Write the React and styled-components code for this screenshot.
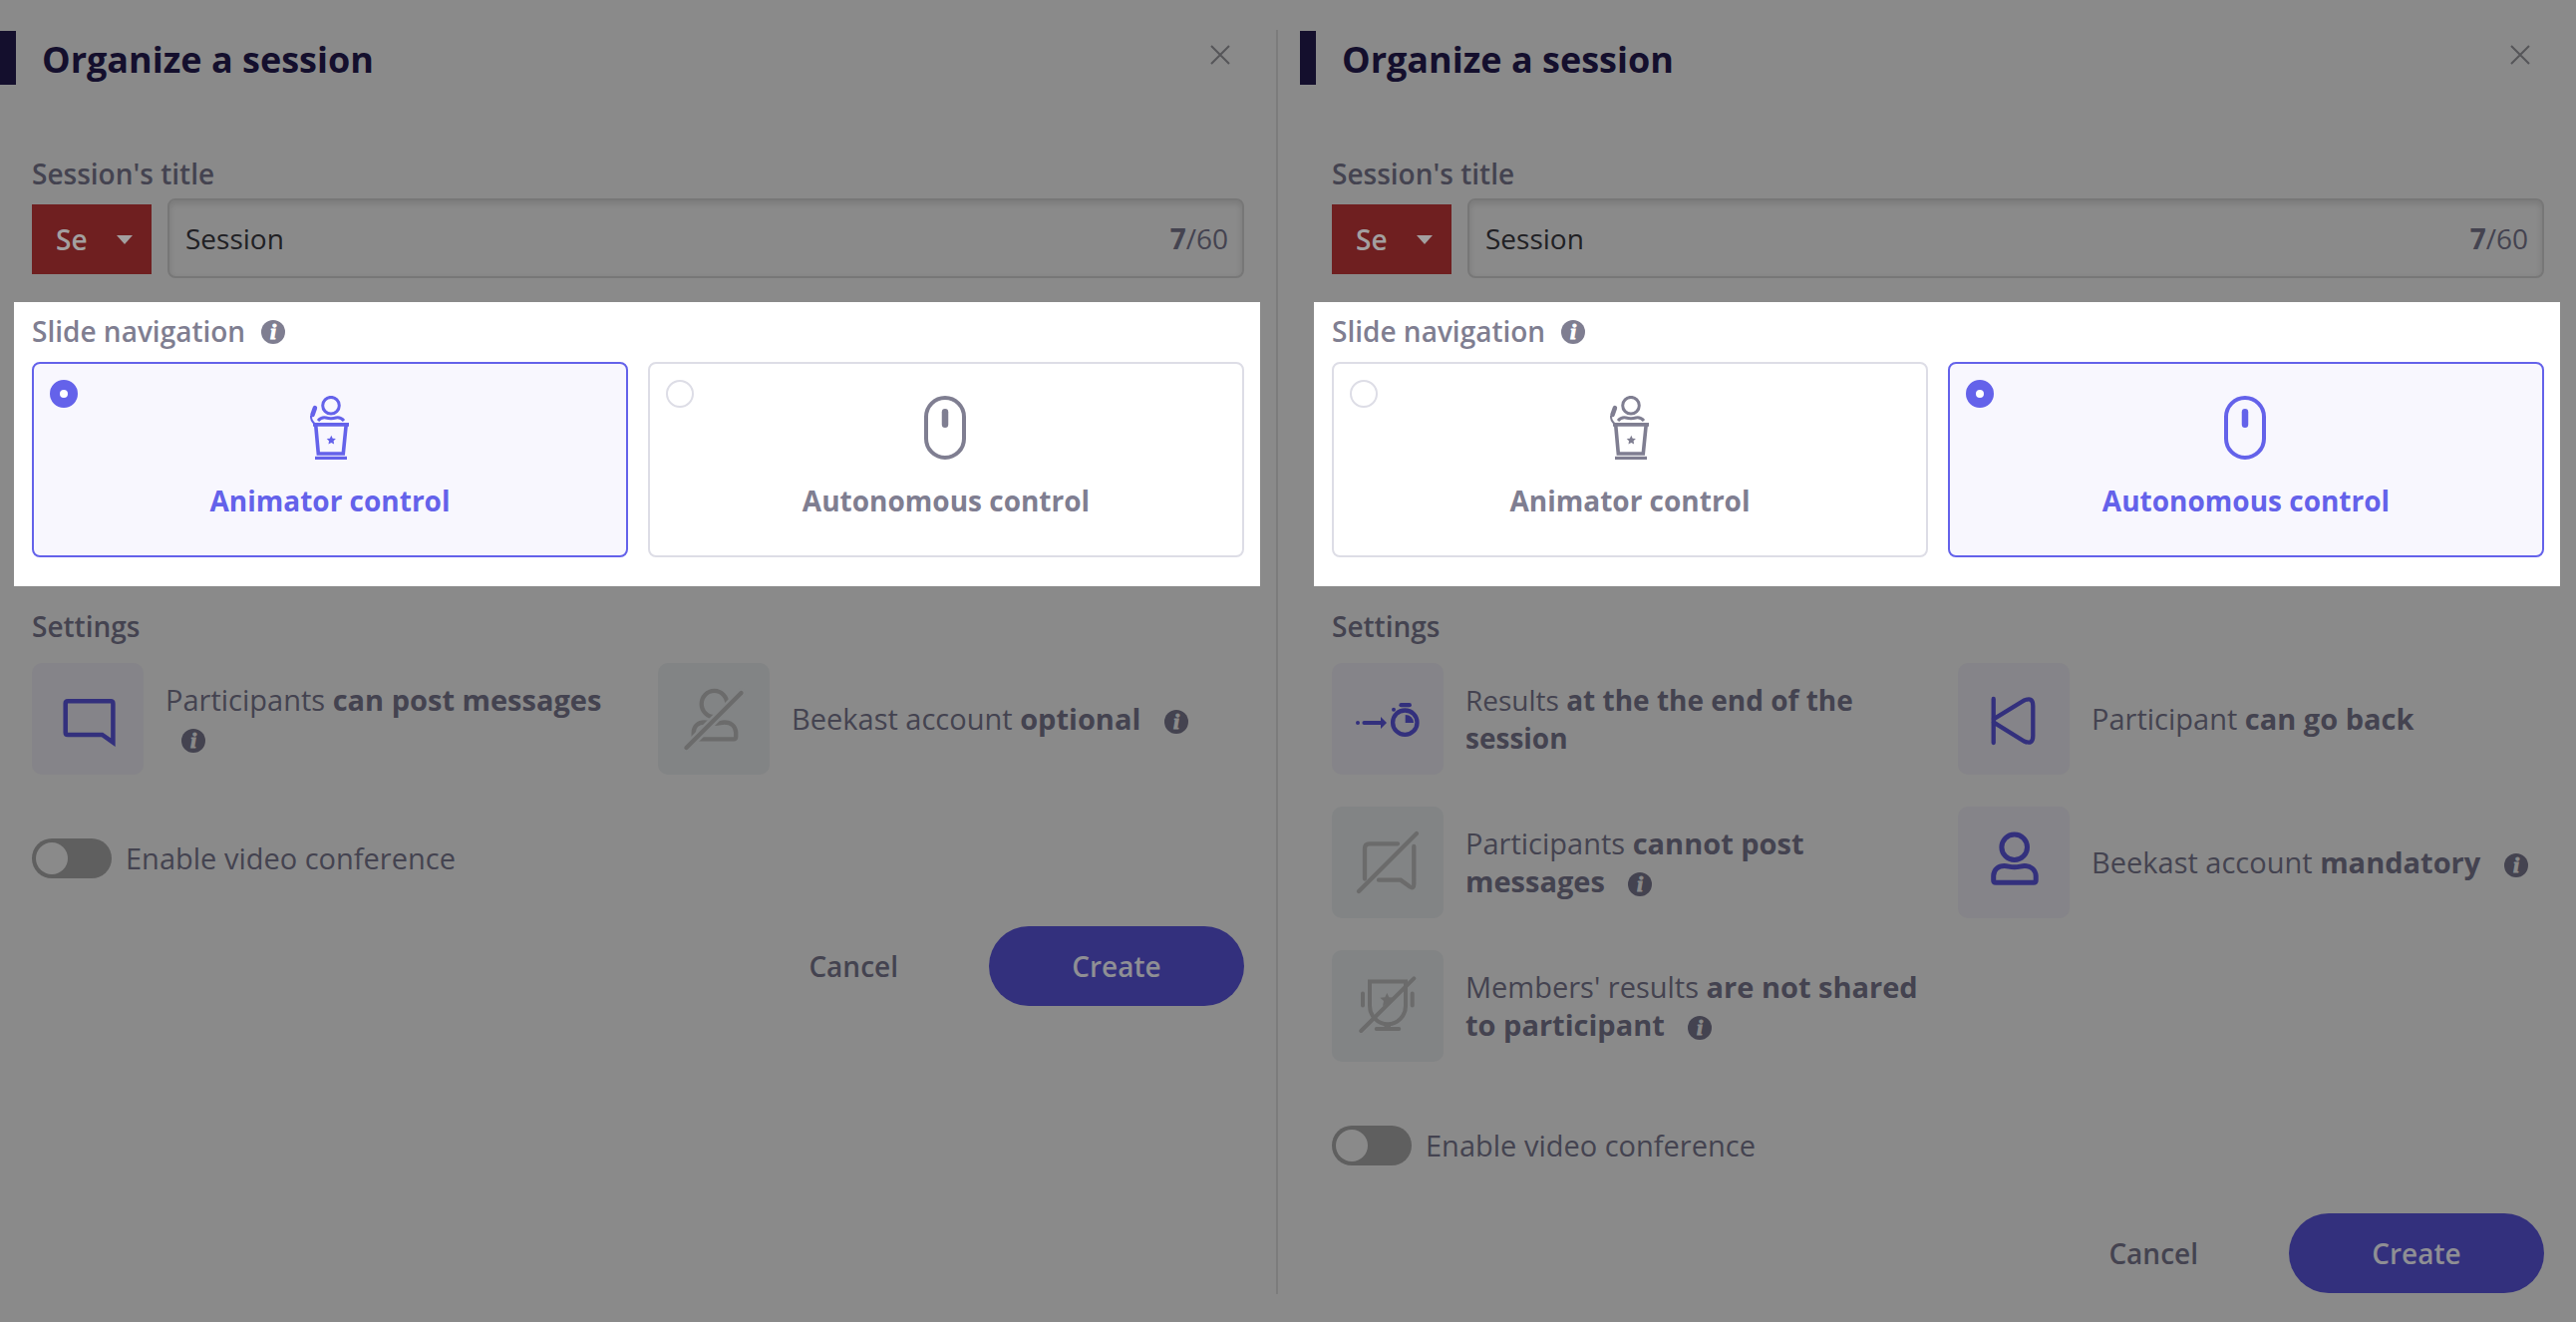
import { useId, useState } from "react";
import styled, { createGlobalStyle } from "styled-components";

const sessions = [
  {
    mode: "animator",
    settings: [
      {
        icon: "message",
        on: true,
        text: "Participants",
        strong: "can post messages",
        info: true,
      },
      {
        icon: "personOff",
        on: false,
        text: "Beekast account",
        strong: "optional",
        info: true,
      },
    ],
  },
  {
    mode: "autonomous",
    settings: [
      {
        icon: "timer",
        on: true,
        text: "Results",
        strong: "at the the end of the session",
        compact: true,
      },
      { icon: "back", on: true, text: "Participant", strong: "can go back" },
      {
        icon: "messageOff",
        on: false,
        text: "Participants",
        strong: "cannot post messages",
        info: true,
      },
      {
        icon: "person",
        on: true,
        text: "Beekast account",
        strong: "mandatory",
        info: true,
      },
      {
        icon: "trophyOff",
        on: false,
        text: "Members' results",
        strong: "are not shared to participant",
        info: true,
      },
    ],
  },
];

const personBody =
  "M35.7 69.5c.3-6.500 4.800-10 11-10 3.600 0 5 1.300 10 1.300s6.400-1.300 10-1.300c6.200 0 11 3.500 11.500 10v4.500q0 2.300-2.300 2.300H38q-2.300 0-2.300-2.300z";

const icons = {
  message: (
    <path
      d="M81.400 79.600 70.500 72H36q-2.300 0-2.300-2.300V40.600q0-2.300 2.300-2.300h43q2.400 0 2.400 2.400z"
      strokeWidth="4.500"
    />
  ),
  messageOff: (
    <>
      <path d="M33 72.500V42q0-4.700 4.700-4.700H66" />
      <path d="M82.300 40v38q0 5-4.300 2.300l-9-6.600H47" />
      <path d="M27 85 85 27" />
    </>
  ),
  person: (
    <g strokeWidth="5">
      <circle cx="56.700" cy="40.700" r="12.800" />
      <path d={personBody} />
    </g>
  ),
  personOff: (
    <>
      <ellipse cx="56.500" cy="41" rx="12.800" ry="13.200" />
      <path d={personBody} />
      <path d="M28.500 85 83.500 30" stroke="#828485" strokeWidth="9" />
      <path d="M28.500 85 83.500 30" />
    </>
  ),
  timer: (
    <>
      <circle cx="26" cy="60" r="2" fill="currentColor" stroke="none" />
      <path d="M32.400 60H49" strokeWidth="4" />
      <path d="m49 54 6 6-6 6z" fill="currentColor" stroke="none" />
      <circle cx="73.300" cy="59.700" r="12.200" />
      <path d="M69.500 42.200h8.300" />
      <circle cx="62" cy="46.700" r="2" fill="currentColor" stroke="none" />
      <path d="M73.700 60v-8q7.800.3 8.300 8z" fill="currentColor" stroke="none" />
    </>
  ),
  back: (
    <>
      <path d="M35.700 36v44" />
      <path d="M36 56.200 66.500 37.500q8.800-4 8.800 5.500v30q0 9.500-8.800 5.500L36 59.600" />
    </>
  ),
  trophyOff: (
    <g strokeWidth="4">
      <path
        d="m55.300 43 2 4.300 4.900.5-3.600 3.300 1 4.800-4.300-2.400-4.300 2.400 1-4.800-3.600-3.300 4.900-.5z"
        fill="currentColor"
        stroke="none"
      />
      <path d="M30.800 82.500 83.800 29.800" stroke="#828485" />
      <path d="M38 31.500h36v24.300a18 18.500 0 0 1-36 0z" strokeLinejoin="miter" />
      <path d="M52.500 73.500h6.500v5h-6.500z" fill="currentColor" stroke="none" />
      <path d="M44.700 79h22.600M31 43.500v12M80.700 43.500v12" />
      <path d="M29.300 81 82.300 28.300" />
    </g>
  ),
};

const AnimatorIcon = () => (
  <svg width="48" height="64" viewBox="1 0 48 64" fill="none" aria-hidden="true">
    <g stroke="currentColor">
      <circle cx="26" cy="9.700" r="8.300" strokeWidth="3" />
      <path d="M13 25q3.500-4 8-3 5 1.500 10 0 4.500-1 8 3" strokeWidth="3" />
      <path d="M9.900 12.200 7.500 19" strokeWidth="4.600" strokeLinecap="round" />
      <path d="M6 20q-.5 4.500 4 8.500" strokeWidth="2" />
      <path d="M8 28.900h36" strokeWidth="3.800" />
      <path d="M10.700 29 13.300 58h25l2.900-29" strokeWidth="3.600" />
      <path d="M10 62.400h32" strokeWidth="3.200" />
    </g>
    <path
      d="m26.300 39.800 1.400 2.900 3.200.4-2.300 2.200.5 3.200-2.800-1.500-2.800 1.500.5-3.200-2.300-2.200 3.200-.4z"
      fill="currentColor"
    />
  </svg>
);

const MouseIcon = () => (
  <svg width="48" height="64" viewBox="1 0 48 64" fill="none" aria-hidden="true">
    <rect
      x="5"
      y="2"
      width="38"
      height="60"
      rx="19"
      stroke="currentColor"
      strokeWidth="4"
    />
    <path
      d="M24 16.300v12.400"
      stroke="currentColor"
      strokeWidth="6.500"
      strokeLinecap="round"
    />
  </svg>
);

const InfoIcon = ({ color, hole }) => (
  <InfoSvg viewBox="0 0 24 24" role="img" aria-label="More information">
    <circle cx="12" cy="12" r="12" fill={color} />
    <text
      x="12"
      y="19"
      textAnchor="middle"
      fontFamily="'Liberation Serif', serif"
      fontStyle="italic"
      fontWeight="700"
      fontSize="22"
      fill={hole}
      stroke={hole}
      strokeWidth="1"
    >
      i
    </text>
  </InfoSvg>
);

const Setting = ({ icon, on, text, strong, info, compact }) => (
  <SettingItem $compact={compact}>
    <Tile $on={on}>
      <svg
        viewBox="0 0 112 112"
        fill="none"
        stroke="currentColor"
        strokeWidth="4.300"
        strokeLinecap="round"
        aria-hidden="true"
      >
        {icons[icon]}
      </svg>
    </Tile>
    <p>
      {text} <strong>{strong}</strong>{" "}
      {info && <InfoIcon color="#444350" hole="#8a8a8a" />}
    </p>
  </SettingItem>
);

const SessionPanel = ({ mode, settings }) => {
  const id = useId();
  const [title, setTitle] = useState("Session");
  const [control, setControl] = useState(mode);
  const [video, setVideo] = useState(false);

  return (
    <Panel>
      <Header>
        <h1>Organize a session</h1>
        <CloseButton type="button" aria-label="Close">
          <svg width="20" height="20" viewBox="0 0 20 20" aria-hidden="true">
            <path d="m1 1 18 18M19 1 1 19" stroke="currentColor" strokeWidth="2" />
          </svg>
        </CloseButton>
      </Header>
      <Section>
        <FieldLabel htmlFor={`${id}title`}>Session's title</FieldLabel>
        <TitleRow>
          <TagSelect>
            <select aria-label="Session tag" defaultValue="Se">
              <option>Se</option>
            </select>
            <svg width="16" height="9" viewBox="0 0 16 9" aria-hidden="true">
              <path d="M0 0h16L8 9z" fill="currentColor" />
            </svg>
          </TagSelect>
          <TitleField>
            <input
              id={`${id}title`}
              type="text"
              maxLength={60}
              value={title}
              onChange={(e) => setTitle(e.target.value)}
            />
            <span>
              <b>{title.length}</b>/60
            </span>
          </TitleField>
        </TitleRow>
      </Section>
      <Spotlight>
        <legend>
          Slide navigation <InfoIcon color="#7f7e91" hole="#ffffff" />
        </legend>
        <Cards>
          <Card $selected={control === "animator"}>
            <Radio
              type="radio"
              name={`${id}control`}
              checked={control === "animator"}
              onChange={() => setControl("animator")}
            />
            <CardBody>
              <AnimatorIcon />
              Animator control
            </CardBody>
          </Card>
          <Card $selected={control === "autonomous"}>
            <Radio
              type="radio"
              name={`${id}control`}
              checked={control === "autonomous"}
              onChange={() => setControl("autonomous")}
            />
            <CardBody>
              <MouseIcon />
              Autonomous control
            </CardBody>
          </Card>
        </Cards>
      </Spotlight>
      <Section>
        <h2>Settings</h2>
        <SettingsGrid>
          {settings.map((setting) => (
            <Setting key={setting.icon} {...setting} />
          ))}
        </SettingsGrid>
        <SwitchLabel>
          <Switch
            type="checkbox"
            role="switch"
            checked={video}
            onChange={(e) => setVideo(e.target.checked)}
          />
          Enable video conference
        </SwitchLabel>
        <Actions>
          <Button type="button">Cancel</Button>
          <Button type="submit" $primary>
            Create
          </Button>
        </Actions>
      </Section>
    </Panel>
  );
};

const App = () => (
  <>
    <GlobalStyle />
    <Page>
      <SessionPanel {...sessions[0]} />
      <Divider />
      <SessionPanel {...sessions[1]} />
    </Page>
  </>
);
export default App;

const GlobalStyle = createGlobalStyle`
  * {
    box-sizing: border-box;
  }
  body {
    margin: 0;
    background-color: #8a8a8a;
    color: #444350;
    font-family: "Open Sans", "Noto Sans", sans-serif;
    font-size: 28px;
    line-height: 38px;
  }
  h1, h2, p {
    margin: 0;
  }
  button, input, select {
    font: inherit;
    color: inherit;
  }
`;

const Page = styled.main`
  display: grid;
  grid-template-columns: minmax(0, 1fr) 24px minmax(0, 1fr);
  min-height: 100vh;
`;

const Divider = styled.div`
  width: 2px;
  margin: 30px 0 28px;
  background-color: #7c7c7c;
`;

const Panel = styled.form`
  padding: 31px 0 29px;
`;

const Header = styled.header`
  display: flex;
  justify-content: space-between;
  padding-right: 34px;
  border-left: 16px solid #140f2d;
  margin-bottom: 70px;
  h1 {
    padding: 4px 0 0 26px;
    color: #140f2d;
    font-size: 36px;
    line-height: 50px;
    font-weight: 700;
  }
`;

const CloseButton = styled.button`
  display: flex;
  align-self: flex-start;
  padding: 14px 12px;
  border: 0;
  background: none;
  color: #565659;
  cursor: pointer;
`;

const Section = styled.section`
  padding: 0 32px;
  h2 {
    margin: 21px 0 18px;
    font-size: 28px;
    line-height: 38px;
    font-weight: 600;
  }
`;

const FieldLabel = styled.label`
  display: block;
  margin-bottom: 6px;
  font-weight: 600;
`;

const TitleRow = styled.div`
  display: flex;
  align-items: center;
  gap: 16px;
`;

const TagSelect = styled.div`
  display: grid;
  align-items: center;
  width: 120px;
  margin-top: 2px;
  background-color: #6f1f20;
  color: #a3a0a0;
  select,
  svg {
    grid-area: 1 / 1;
  }
  select {
    appearance: none;
    width: 100%;
    height: 70px;
    padding: 0 24px;
    border: 0;
    background: none;
    font-weight: 600;
  }
  svg {
    justify-self: end;
    margin-right: 19px;
    pointer-events: none;
  }
`;

const TitleField = styled.div`
  display: flex;
  align-items: center;
  flex: 1;
  height: 80px;
  padding: 0 14px 0 16px;
  border: 2px solid #777777;
  border-radius: 8px;
  box-shadow: inset 0 3px 6px rgba(0, 0, 0, 0.12);
  input {
    flex: 1;
    min-width: 0;
    padding: 0;
    border: 0;
    outline: 0;
    background: none;
    color: #202024;
  }
`;

const Spotlight = styled.fieldset`
  margin: 24px 16px 0 14px;
  padding: 10px 16px 29px 18px;
  border: 0;
  background-color: #ffffff;
  color: #7f7e91;
  legend {
    float: left;
    width: 100%;
    height: 38px;
    padding: 0;
    margin-bottom: 12px;
    font-weight: 600;
  }
`;

const InfoSvg = styled.svg`
  width: 24px;
  height: 24px;
  margin-left: 16px;
  vertical-align: -4px;
  legend & {
    margin-left: 9px;
    vertical-align: -2px;
  }
`;

const Cards = styled.div`
  clear: both;
  display: grid;
  grid-template-columns: 1fr 1fr;
  gap: 20px;
`;

const Card = styled.label`
  display: grid;
  grid-template-columns: 28px 1fr 28px;
  align-items: start;
  padding: 16px;
  border: 2px solid ${(props) => (props.$selected ? "#6462ea" : "#dddde6")};
  border-radius: 8px;
  background-color: ${(props) => (props.$selected ? "#f8f7fe" : "#ffffff")};
  color: ${(props) => (props.$selected ? "#6462ea" : "#7f7e91")};
  cursor: pointer;
`;

const Radio = styled.input`
  appearance: none;
  width: 28px;
  height: 28px;
  margin: 0;
  border: 2px solid #dddde6;
  border-radius: 50%;
  background-color: #ffffff;
  &:checked {
    border: 10px solid #6462ea;
  }
`;

const CardBody = styled.span`
  display: flex;
  flex-direction: column;
  align-items: center;
  gap: 22px;
  padding: 16px 0 20px;
  font-weight: 700;
`;

const SettingsGrid = styled.div`
  display: grid;
  grid-template-columns: 1fr 1fr;
  gap: 32px 40px;
`;

const SettingItem = styled.div`
  display: flex;
  align-items: center;
  gap: 22px;
  font-size: ${(props) => (props.$compact ? "28px" : "29px")};
  strong {
    font-weight: 700;
  }
`;

const Tile = styled.div`
  flex: none;
  width: 112px;
  height: 112px;
  border-radius: 10px;
  background-color: ${(props) => (props.$on ? "#858489" : "#828485")};
  color: ${(props) => (props.$on ? "#33307d" : "#6b6b6b")};
  svg {
    display: block;
  }
`;

const SwitchLabel = styled.label`
  display: flex;
  align-items: center;
  gap: 14px;
  margin: 64px 0 48px;
  font-size: 29px;
`;

const Switch = styled.input`
  appearance: none;
  width: 80px;
  height: 40px;
  margin: 0;
  padding: 4px;
  border-radius: 20px;
  background-color: #5f5f5f;
  cursor: pointer;
  &::before {
    content: "";
    display: block;
    width: 32px;
    height: 32px;
    border-radius: 50%;
    background-color: #8a8a8a;
  }
  &:checked::before {
    margin-left: auto;
  }
`;

const Actions = styled.div`
  display: flex;
  justify-content: flex-end;
  gap: 47px;
`;

const Button = styled.button`
  height: 80px;
  min-width: ${(props) => (props.$primary ? "256px" : "0")};
  padding: 0 44px;
  border: 0;
  border-radius: 40px;
  background-color: ${(props) => (props.$primary ? "#33307d" : "transparent")};
  color: ${(props) => (props.$primary ? "#8f8f94" : "#444350")};
  font-weight: 600;
  cursor: pointer;
`;
